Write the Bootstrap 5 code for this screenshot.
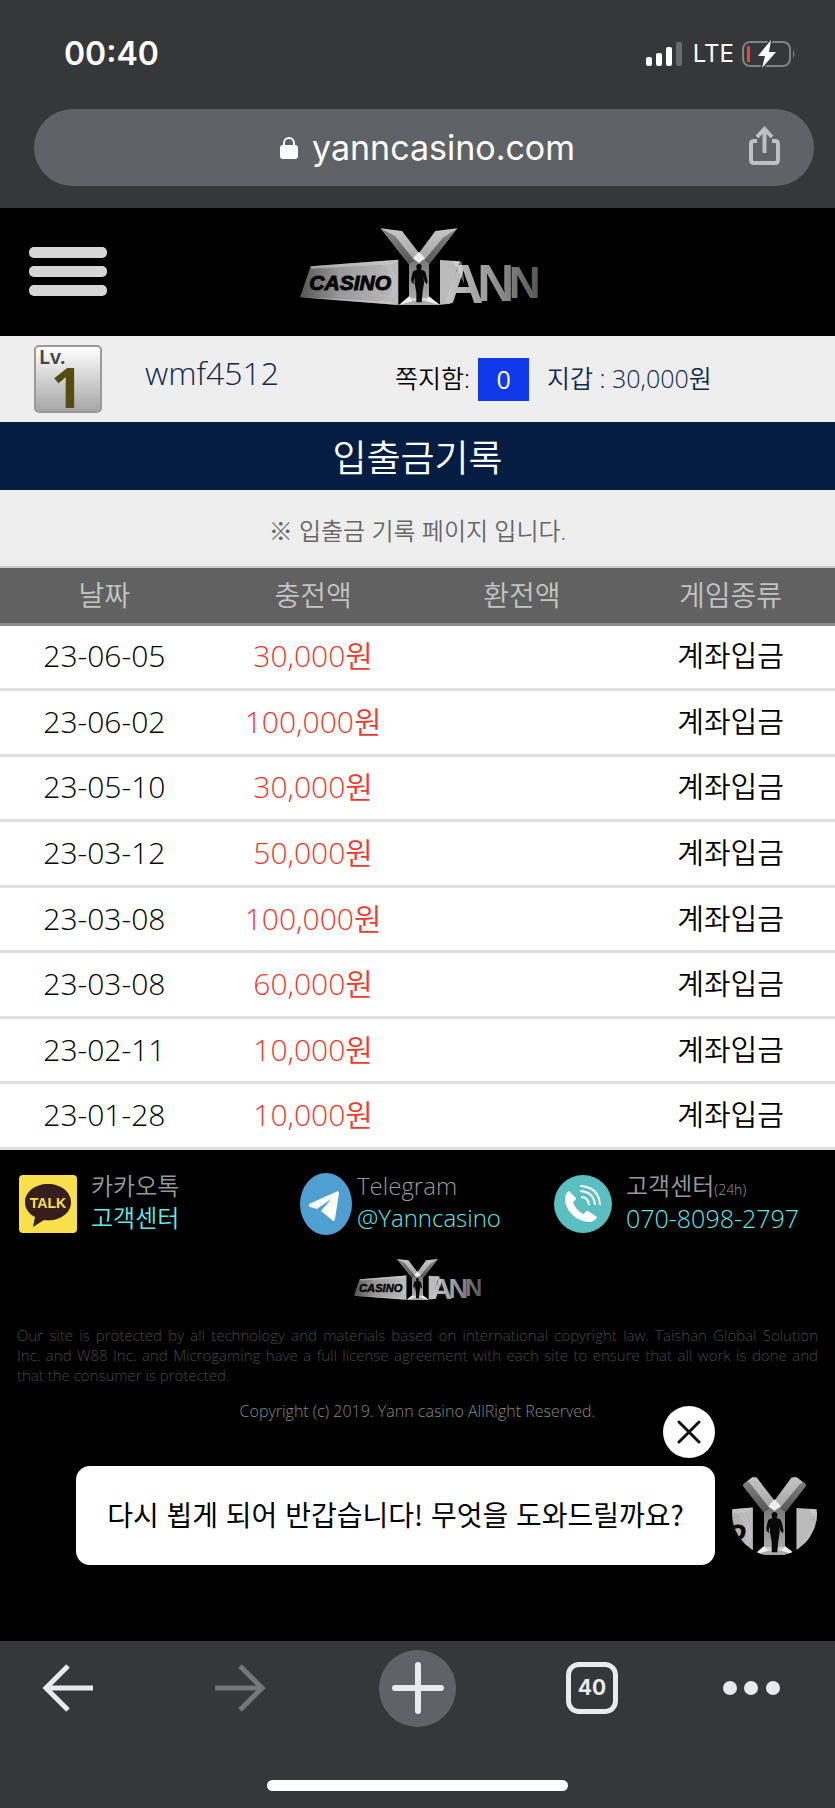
<!DOCTYPE html>
<html lang="ko">
<head>
<meta charset="utf-8">
<meta name="viewport" content="width=device-width, initial-scale=1">
<title>입출금기록</title>
<link href="https://cdn.jsdelivr.net/npm/bootstrap@5.3.0/dist/css/bootstrap.min.css" rel="stylesheet">
<style>
body{background:#000;font-family:"Open Sans","Noto Sans CJK KR",sans-serif;font-weight:350;color:#000}
a{text-decoration:none}
svg{display:block;flex:none}
button{color:inherit}
.chrome{background:#363738;font-family:Inter,sans-serif;font-weight:400;color:#fff}
.status-row{height:107px;padding:0 39px 0 64px}
.clock{font-size:32px;font-weight:600;line-height:40px}
.lte{font-size:24px;font-weight:400;line-height:32px}
.address{height:77px;background:#5f6368;margin:2px 21px 22px 34px;padding:0 34px 0 72px}
.address-text{font-size:34px;gap:14px}
.site-head{height:128px;padding:0 29px 2px;display:grid;grid-template-columns:1fr auto 1fr;align-items:center}
.menu-bar{width:78px;height:11px;border-radius:5px;background:#d6d6d6}
.user-strip{height:86px;background:#eee;color:#0f2850;padding-left:34px;font-size:25px}
.level{width:68px;height:68px;border:2px solid #999;border-radius:5px;background:linear-gradient(#fff,#a6a6a6);overflow:visible}
.user-name{font-size:32px;line-height:40px;margin:0 116px 12px 43px}
.msg-count{width:51px;height:43px;background:#1238ec;line-height:43px;font-weight:400;margin:0 18px 0 8px}
.page-title{background:#061d43;color:#fff;font-size:37px;line-height:64px;padding-top:4px;font-weight:350}
.notice{background:#eee;color:#666;font-size:24px;line-height:70px;padding-top:6px}
.records{table-layout:fixed;height:584px;font-size:30px;line-height:36px;background:#fff}
.records th{background:#616161;color:#c4c4c4;font-weight:350;font-size:28px;height:57px;padding:0;border-top:2px solid #ccc;border-bottom:3px solid #8a8a8a}
.records td{padding:0 0 1px;border-bottom:3px solid #dedfdf}
.records td:last-child{font-size:29px}
.amount{color:#ee3a2e}
.contacts{padding:20px 19px;font-size:24px;line-height:32px;color:#999;display:grid;grid-template-columns:281fr 254fr 262fr}
.contacts a{color:#62e8e6;display:block}
.contact-text{padding:0 0 4px 14px}
.contact-text.near{padding-left:5px}
.phone{font-size:25px}
.hours{font-size:14px;line-height:1}
.legal{color:#484848;font-size:15px;line-height:20px;padding:0 17px;text-align:justify}
.copyright{color:#888;font-size:16px;line-height:20px}
.chat{padding:45px 18px 76px 76px;gap:17px}
.bubble{background:#fff;border-radius:14px;height:99px;font-family:"Noto Sans CJK KR",sans-serif;font-size:28px;font-weight:400}
.close-chat{right:0;top:-60px;width:52px;height:52px;background:#fff}
.tools{padding-top:8px;height:86px;display:grid;grid-template-columns:134fr 214fr 139fr 210fr 108fr 30fr;place-items:center}
.new-tab{width:77px;height:77px;background:#5f6368}
.tab-count{width:52px;height:52px;border:5px solid #e8eaed;border-radius:13px;font-size:21px;font-weight:700;color:#e8eaed}
.home-area{height:81px;padding-top:53px}
.home-line{width:36%;height:11px;border-radius:6px;background:#fff}
</style>
</head>
<body>
<svg width="0" height="0" class="position-absolute" aria-hidden="true">
<defs>
<linearGradient id="gPlate"><stop offset="0" stop-color="#555"/><stop offset=".4" stop-color="#999"/><stop offset="1" stop-color="#bbb"/></linearGradient>
<linearGradient id="gAnn" gradientUnits="userSpaceOnUse" x1="480" y1="0" x2="780" y2="0"><stop offset="0" stop-color="#ccc"/><stop offset=".5" stop-color="#999"/><stop offset="1" stop-color="#555"/></linearGradient>
<linearGradient id="gArm" x1="0" y1="0" x2="0" y2="1"><stop offset="0" stop-color="#c6c6c6"/><stop offset=".6" stop-color="#999"/><stop offset="1" stop-color="#ddd"/></linearGradient>
<linearGradient id="gDark" x1="0" y1="0" x2="0" y2="1"><stop offset="0" stop-color="#888"/><stop offset="1" stop-color="#555"/></linearGradient>
<linearGradient id="gStem" x1="0" y1="0" x2="0" y2="1"><stop offset="0" stop-color="#777"/><stop offset="1" stop-color="#aaa"/></linearGradient>
<symbol id="logo" viewBox="60 42 720 232">
<path fill="url(#gPlate)" d="M92 156 355 136V272L60 249Z"/>
<path fill="#ccc" d="M92 156 355 136 337 150 95 163ZM60 249 337 262 355 272Z" opacity=".6"/>
<path fill="none" stroke="#ddd" stroke-width="2" opacity=".6" d="M300 142Q345 170 338 230Q330 250 300 266M318 140Q350 180 346 225Q340 250 318 268"/>
<text x="88" y="228" font-family="'Liberation Sans',sans-serif" font-weight="700" font-style="italic" font-size="63" fill="#050505" stroke="#050505" stroke-width="3">CASINO</text>
<path fill="url(#gArm)" d="M302 42 366 50 417 116 466 50 532 42 447 150V250L480 272H357L387 250V150Z"/>
<path fill="url(#gDark)" d="M302 42 345 65 405 140 387 150ZM532 42 489 70 432 138 447 150Z"/>
<path fill="url(#gStem)" d="M387 150 405 137H430L447 150V250H387Z"/>
<path fill="#eee" d="M417 112 435 132 417 146 399 132ZM357 272 387 246 400 262ZM480 272 447 246 436 262Z"/>
<path fill="#aaa" d="M357 272 400 260H436L480 272Z"/>
<path fill="#080808" d="M417 149C423 149 426 153 425 160L423 166 434 170C439 178 440 190 443 203L440 210 433 200 431 188 432 206 428 232 425 264H409L409 235 404 207 404 190 400 202 403 209 396 205C391 198 396 184 399 171L411 166 409 160C408 153 411 149 417 149Z"/>
<path fill="#bbb" d="M480 137 540 141 532 160 512 236V268L480 271Z"/>
<g font-family="'Liberation Sans',sans-serif" font-weight="700" fill="url(#gAnn)"><text x="490" y="267" font-size="168">A</text><text x="592" y="261" font-size="154">N</text><text x="686" y="252" font-size="132">N</text></g>
<path fill="#ddd" opacity=".5" d="M516 140 545 142 553 210 530 160Z"/>
</symbol>
</defs>
</svg>

<header class="chrome overflow-hidden">
<div class="status-row d-flex align-items-center justify-content-between">
<span class="clock">00:40</span>
<div class="d-flex align-items-center gap-2">
<svg width="40" height="26" viewBox="0 0 40 26" fill="#fff"><rect x="1" y="16" width="6" height="9" rx="2"/><rect x="11" y="12" width="6" height="13" rx="2"/><rect x="21" y="6" width="6" height="19" rx="2"/><rect x="31" y="1" width="6" height="24" rx="2" opacity=".25"/></svg>
<span class="lte">LTE</span>
<svg width="54" height="28" viewBox="0 0 54 28"><rect x="1" y="2" width="47" height="24" rx="7" fill="none" stroke="#818283" stroke-width="2"/><rect x="5" y="6" width="3" height="16" rx="1" fill="#ee4438"/><path d="M51 10Q54 14 51 18Z" fill="#818283"/><path d="M29 0 16 16H23L20 28 34 12H27Z" fill="#fff" stroke="#363738" stroke-width="3" paint-order="stroke"/></svg>
</div>
</div>
<div class="address rounded-pill d-flex align-items-center">
<button type="button" class="address-text btn border-0 p-0 flex-grow-1 d-flex align-items-center justify-content-center text-white"><svg width="18" height="24" viewBox="0 0 18 24"><path d="M4 11V7a5 5 0 0 1 10 0v4" fill="none" stroke="#fff" stroke-width="2"/><rect y="9" width="18" height="14" rx="3" fill="#fff"/></svg><span>yanncasino.com</span></button>
<button type="button" class="btn border-0 p-0" aria-label="공유"><svg width="31" height="44" viewBox="0 0 31 44" fill="none" stroke="#bdc1c6" stroke-width="4"><path d="M8 15H5Q2 15 2 18V34Q2 37 5 37H26Q29 37 29 34V18Q29 15 26 15H23M15.500 27V4M8 11 15.500 3 23 11"/></svg></button>
</div>
</header>

<main>
<div class="site-head">
<button type="button" class="btn border-0 p-0 d-flex flex-column gap-2" aria-label="메뉴"><span class="menu-bar"></span><span class="menu-bar"></span><span class="menu-bar"></span></button>
<a href="#" class="ms-1 mb-2" aria-label="Yann casino"><svg width="240" height="78"><use href="#logo"/></svg></a>
</div>
<div class="user-strip d-flex align-items-center">
<svg class="level" viewBox="0 0 64 64"><text x="3" y="17" font-family="Noto Sans" font-weight="600" font-size="20" fill="#444">Lv.</text><text x="15" y="61" font-family="Noto Sans" font-weight="700" font-size="56" fill="#574b14">1</text></svg>
<span class="user-name">wmf4512</span>
<span class="text-black">쪽지함:</span>
<a href="#" class="msg-count text-white text-center">0</a>
<span>지갑 : 30,000원</span>
</div>
<h1 class="page-title text-center mb-0">입출금기록</h1>
<p class="notice text-center mb-0">※ 입출금 기록 페이지 입니다.</p>
<table class="records w-100 text-center">
<thead><tr><th scope="col">날짜</th><th scope="col">충전액</th><th scope="col">환전액</th><th scope="col">게임종류</th></tr></thead>
<tbody>
<tr><td>23-06-05</td><td class="amount">30,000원</td><td></td><td>계좌입금</td></tr>
<tr><td>23-06-02</td><td class="amount">100,000원</td><td></td><td>계좌입금</td></tr>
<tr><td>23-05-10</td><td class="amount">30,000원</td><td></td><td>계좌입금</td></tr>
<tr><td>23-03-12</td><td class="amount">50,000원</td><td></td><td>계좌입금</td></tr>
<tr><td>23-03-08</td><td class="amount">100,000원</td><td></td><td>계좌입금</td></tr>
<tr><td>23-03-08</td><td class="amount">60,000원</td><td></td><td>계좌입금</td></tr>
<tr><td>23-02-11</td><td class="amount">10,000원</td><td></td><td>계좌입금</td></tr>
<tr><td>23-01-28</td><td class="amount">10,000원</td><td></td><td>계좌입금</td></tr>
</tbody>
</table>
</main>

<footer>
<div class="contacts">
<div class="d-flex align-items-center">
<svg width="58" height="58" viewBox="0 0 58 58"><rect width="58" height="58" rx="4" fill="#f7e04b"/><path fill="#371d1e" d="M29 9C16 9 6 17 6 27 6 34 10 39 16 42L14 52 25 45C41 47 52 38 52 27 52 17 42 9 29 9Z"/><text x="29" y="33" text-anchor="middle" font-family="Liberation Sans" font-weight="700" font-size="14" fill="#f7e04b">TALK</text></svg>
<div class="contact-text">카카오톡<a href="#">고객센터</a></div>
</div>
<div class="d-flex align-items-center">
<svg width="52" height="62" viewBox="0 0 52 62"><ellipse cx="26" cy="31" rx="26" ry="31" fill="#4f9fd3"/><path fill="#fff" d="M38 18 9 31Q8 33 10 34L17 36 31 26 21 38 33 48Q35 48 35 46L39 20Z"/></svg>
<div class="contact-text near">Telegram<a href="#">@Yanncasino</a></div>
</div>
<div class="d-flex align-items-center">
<svg width="58" height="58" viewBox="0 0 58 58"><circle cx="29" cy="29" r="29" fill="#5bbfc2"/><path fill="#fff" d="M15 16Q10 19 11 27C14 38 23 46 34 47Q41 47 43 42L34 36Q31 36 30 39C25 38 20 31 19 27Q22 25 22 23Z"/><g fill="none" stroke="#fff" stroke-width="2"><path d="M27 22Q34 22 35 30M26 16Q40 17 41 30M26 11Q45 12 46 30"/></g></svg>
<div class="contact-text">고객센터<span class="hours">(24h)</span><a href="#" class="phone">070-8098-2797</a></div>
</div>
</div>
<div class="d-flex justify-content-center"><svg width="128" height="43"><use href="#logo"/></svg></div>
<p class="legal mb-3 mt-4">Our site is protected by all technology and materials based on international copyright law. Taishan Global Solution Inc.&nbsp;and&nbsp;W88 Inc. and Microgaming have a full license agreement with each site to ensure that all work is done and that&nbsp;the&nbsp;consumer is protected.</p>
<p class="copyright text-center mb-0">Copyright (c) 2019. Yann casino AllRight Reserved.</p>
<div class="chat d-flex align-items-center">
<div class="bubble position-relative flex-grow-1 d-flex align-items-center justify-content-center pb-1">다시 뵙게 되어 반갑습니다! 무엇을 도와드릴까요?
<button type="button" class="close-chat btn border-0 p-0 rounded-circle position-absolute d-flex align-items-center justify-content-center" aria-label="닫기"><svg width="24" height="24" viewBox="0 0 24 24" stroke="#111" stroke-width="3" stroke-linecap="round"><path d="M2 2 22 22M22 2 2 22"/></svg></button>
</div>
<a href="#" class="mb-1" aria-label="상담"><svg class="rounded-circle" width="85" height="85" viewBox="295 31 244 244"><use href="#logo" x="60" y="42" width="720" height="232"/></svg></a>
</div>
</footer>

<nav class="chrome">
<div class="tools">
<button type="button" class="btn border-0 p-0" aria-label="뒤로"><svg width="52" height="48" viewBox="0 0 52 48" fill="none" stroke="#e8eaed" stroke-width="5"><path d="M52 24H5M27 2 5 24 27 46"/></svg></button>
<button type="button" class="btn border-0 p-0" aria-label="앞으로"><svg width="52" height="48" viewBox="0 0 52 48" fill="none" stroke="#757677" stroke-width="5"><path d="M0 24H47M25 2 47 24 25 46"/></svg></button>
<button type="button" class="new-tab btn border-0 p-0 rounded-circle d-flex align-items-center justify-content-center" aria-label="새 탭"><svg width="52" height="52" viewBox="0 0 52 52" stroke="#e8eaed" stroke-width="6" stroke-linecap="round"><path d="M3 26H49M26 3V49"/></svg></button>
<button type="button" class="tab-count btn p-0 d-flex align-items-center justify-content-center">40</button>
<button type="button" class="btn border-0 p-0" aria-label="더보기"><svg width="57" height="14" viewBox="0 0 57 14" fill="#e8eaed"><circle cx="7" cy="7" r="7"/><circle cx="28" cy="7" r="7"/><circle cx="50" cy="7" r="7"/></svg></button>
</div>
<div class="home-area"><div class="home-line mx-auto"></div></div>
</nav>
<script src="https://cdn.jsdelivr.net/npm/bootstrap@5.3.0/dist/js/bootstrap.bundle.min.js"></script>
</body>
</html>
